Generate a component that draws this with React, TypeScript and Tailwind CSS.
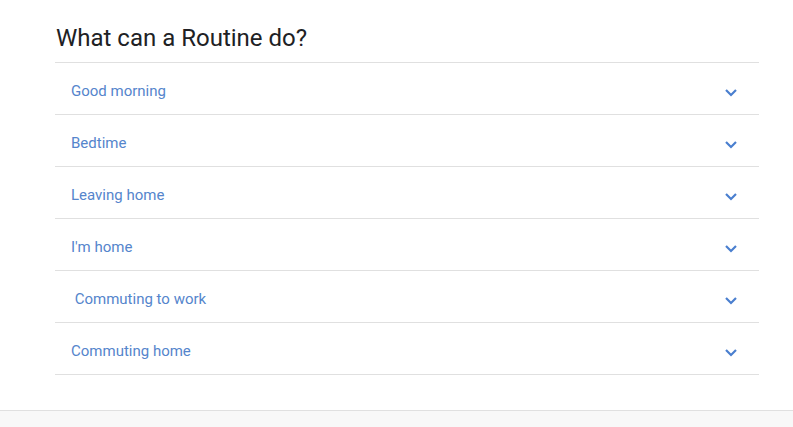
import { useState } from "react"

const routines = [
  "Good morning",
  "Bedtime",
  "Leaving home",
  "I'm home",
  "\u00a0Commuting to work",
  "Commuting home",
]

const Chevron = () => (
  <svg width="14" height="9" viewBox="0 0 14 9" className="text-[#4a7fcf]">
    <path d="M2 2l5 5 5-5" fill="none" stroke="currentColor" strokeWidth="2.2" />
  </svg>
)

export default function App() {
  const [open, setOpen] = useState<number | null>(null)

  return (
    <div className="min-h-[427px] bg-white font-['Roboto',sans-serif] flex flex-col">
      <section className="pl-[55px] pr-[34px] pt-[22px] pb-[35px]">
        <h2 className="pl-px text-[24px] leading-[32px] text-[#202124] mb-[8px]">What can a Routine do?</h2>
        <ul className="border-t border-[#e0e0e0]">
          {routines.map((name, i) => (
            <li key={name} className="border-b border-[#e0e0e0]">
              <button
                onClick={() => setOpen(open === i ? null : i)}
                className="w-full h-[51px] flex items-center justify-between pl-4 pr-[21px] text-left"
              >
                <span className="mt-[5px] text-[15px] text-[#5585cc] whitespace-pre">{name}</span>
                <span className="mt-[7px]">
                  <Chevron />
                </span>
              </button>
            </li>
          ))}
        </ul>
      </section>
      <div className="flex-1 border-t border-[#e0e0e0] bg-[#f8f8f8]" />
    </div>
  )
}
